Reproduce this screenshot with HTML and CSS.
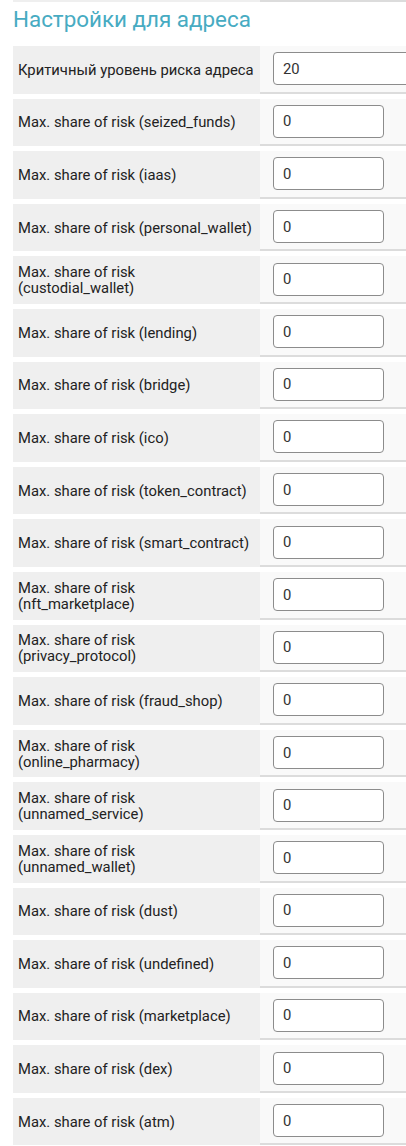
FILE: index.html
```html
<!DOCTYPE html>
<html lang="ru">
<head>
<meta charset="utf-8">
<title>Настройки для адреса</title>
<link rel="stylesheet" href="styles.css">
</head>
<body>
<div class="page">
  <div class="row row-stub"><div class="label"></div><div class="value"></div></div>
  <h2 class="title">Настройки для адреса</h2>
  <div class="settings">
    <div class="row"><div class="label">Критичный уровень риска адреса</div><div class="value"><input class="field field-wide" type="text" value="20"></div></div>
    <div class="row"><div class="label">Max. share of risk (seized_funds)</div><div class="value"><input class="field" type="text" value="0"></div></div>
    <div class="row"><div class="label">Max. share of risk (iaas)</div><div class="value"><input class="field" type="text" value="0"></div></div>
    <div class="row"><div class="label">Max. share of risk (personal_wallet)</div><div class="value"><input class="field" type="text" value="0"></div></div>
    <div class="row"><div class="label">Max. share of risk<br>(custodial_wallet)</div><div class="value"><input class="field" type="text" value="0"></div></div>
    <div class="row"><div class="label">Max. share of risk (lending)</div><div class="value"><input class="field" type="text" value="0"></div></div>
    <div class="row"><div class="label">Max. share of risk (bridge)</div><div class="value"><input class="field" type="text" value="0"></div></div>
    <div class="row"><div class="label">Max. share of risk (ico)</div><div class="value"><input class="field" type="text" value="0"></div></div>
    <div class="row"><div class="label">Max. share of risk (token_contract)</div><div class="value"><input class="field" type="text" value="0"></div></div>
    <div class="row"><div class="label">Max. share of risk (smart_contract)</div><div class="value"><input class="field" type="text" value="0"></div></div>
    <div class="row"><div class="label">Max. share of risk<br>(nft_marketplace)</div><div class="value"><input class="field" type="text" value="0"></div></div>
    <div class="row"><div class="label">Max. share of risk<br>(privacy_protocol)</div><div class="value"><input class="field" type="text" value="0"></div></div>
    <div class="row"><div class="label">Max. share of risk (fraud_shop)</div><div class="value"><input class="field" type="text" value="0"></div></div>
    <div class="row"><div class="label">Max. share of risk<br>(online_pharmacy)</div><div class="value"><input class="field" type="text" value="0"></div></div>
    <div class="row"><div class="label">Max. share of risk<br>(unnamed_service)</div><div class="value"><input class="field" type="text" value="0"></div></div>
    <div class="row"><div class="label">Max. share of risk<br>(unnamed_wallet)</div><div class="value"><input class="field" type="text" value="0"></div></div>
    <div class="row"><div class="label">Max. share of risk (dust)</div><div class="value"><input class="field" type="text" value="0"></div></div>
    <div class="row"><div class="label">Max. share of risk (undefined)</div><div class="value"><input class="field" type="text" value="0"></div></div>
    <div class="row"><div class="label">Max. share of risk (marketplace)</div><div class="value"><input class="field" type="text" value="0"></div></div>
    <div class="row"><div class="label">Max. share of risk (dex)</div><div class="value"><input class="field" type="text" value="0"></div></div>
    <div class="row"><div class="label">Max. share of risk (atm)</div><div class="value"><input class="field" type="text" value="0"></div></div>
  </div>
</div>
</body>
</html>
```

FILE: styles.css
```css
html, body {
  margin: 0;
  padding: 0;
  background: #ffffff;
}

body {
  font-family: Roboto, "Liberation Sans", Arial, sans-serif;
  color: #222222;
  overflow: hidden;
}

.page {
  padding-left: 13px;
}

.row {
  display: grid;
  grid-template-columns: 247px 1fr;
  height: 47.6px;
}

.row-stub {
  height: 2px;
}

.row-stub .label {
  background: #efefef;
  padding: 0;
}

.row-stub .value {
  background: #dcdcdc;
  border: 0;
}

.title {
  margin: 4px 0 14px 0;
  font-size: 22.4px;
  line-height: 26px;
  font-weight: 400;
  color: #47abc2;
}

.settings {
  display: flex;
  flex-direction: column;
  gap: 5px;
}

.label {
  background: #efefef;
  display: flex;
  align-items: center;
  padding-left: 5px;
  font-size: 14.8px;
  line-height: 16px;
  color: #222222;
}

.value {
  background: #f9f9f9;
  border-bottom: 2px solid #dcdcdc;
  display: flex;
  align-items: center;
  padding-left: 13px;
  overflow: hidden;
}

.field {
  box-sizing: border-box;
  width: 111px;
  height: 33px;
  border: 1px solid #8c8c8c;
  border-radius: 4px;
  background: #ffffff;
  padding: 0 0 0 9px;
  font-family: Roboto, "Liberation Sans", Arial, sans-serif;
  font-size: 14.8px;
  color: #333333;
  margin: 0;
  flex-shrink: 0;
}

.field-wide {
  width: 200px;
}
```
